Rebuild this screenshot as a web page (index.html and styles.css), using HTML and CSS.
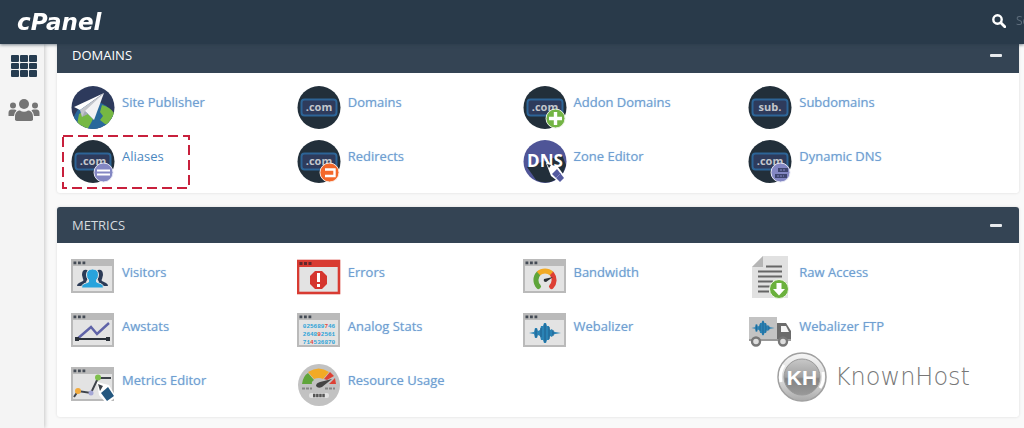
FILE: index.html
```html
<!DOCTYPE html>
<html lang="en">
<head>
    <meta charset="UTF-8">
    <meta name="viewport" content="width=device-width, initial-scale=1.0">
    <title>cPanel</title>
    <link rel="stylesheet" href="styles.css">
</head>

<body>
    <!-- shared icon parts -->
    <svg class="defs" width="0" height="0" aria-hidden="true">
        <symbol id="disc" viewBox="0 0 44 44">
            <circle cx="22" cy="22.5" r="21.5" fill="#222f3a"/>
            <rect x="4.5" y="14.5" width="35" height="16" rx="3" fill="#2e3b5c" stroke="#2d6496" stroke-width="2"/>
        </symbol>
        <symbol id="window" viewBox="0 0 44 44">
            <rect x="1" y="5" width="41" height="32" fill="#e3e3e3" stroke="#bababa" stroke-width="2"/>
            <path d="M0 4h43v7H0z" fill="#bababa"/>
            <path d="M2.500 6.500h2.800v2.800H2.500zM7 6.500h2.800v2.800H7zM11.500 6.500h2.800v2.800h-2.800z" fill="#444b55"/>
        </symbol>
        <symbol id="wave" viewBox="0 0 32 22">
            <path d="M0 11l5-1 1-4h2l1 3 2-1 1-4h2l1-3h2l1 3h2l1 4 2-1 1 2 2 1 6 1-6 1-2 1-1 2-2-1-1 4h-2l-1 3h-2l-1-3h-2l-1-4-2-1-1 3H6l-1-4z" fill="#2a83b5"/>
            <path d="M7 7v8M12 6v9M16 2v18M20 5v12M24 8v6" stroke="#1f5f8c" fill="none"/>
        </symbol>
    </svg>

    <header class="topbar">
        <a class="brand" href="#">cPanel</a>
        <form class="search">
            <label for="q" aria-label="Search">
                <svg width="14" height="14" viewBox="0 0 14 14">
                    <circle cx="5.500" cy="5.500" r="4.200" fill="none" stroke="#fff" stroke-width="2.400"/>
                    <path d="M8.800 8.800l4 4" stroke="#fff" stroke-width="2.800" stroke-linecap="round"/>
                </svg>
            </label>
            <input type="text" id="q" placeholder="Search">
        </form>
    </header>

    <nav class="sidebar">
        <a href="#" aria-label="Home">
            <svg width="32" height="24" viewBox="0 0 32 24">
                <g fill="#263c50">
                    <rect x="3" y="1" width="8" height="7" rx="1"/><rect x="12" y="1" width="8" height="7" rx="1"/><rect x="21" y="1" width="8" height="7" rx="1"/>
                    <rect x="3" y="9" width="8" height="6" rx="1"/><rect x="12" y="9" width="8" height="6" rx="1"/><rect x="21" y="9" width="8" height="6" rx="1"/>
                    <rect x="3" y="16" width="8" height="7" rx="1"/><rect x="12" y="16" width="8" height="7" rx="1"/><rect x="21" y="16" width="8" height="7" rx="1"/>
                </g>
            </svg>
        </a>
        <a href="#" aria-label="User Manager">
            <svg width="32" height="24" viewBox="0 0 32 24">
                <g fill="#757575">
                    <circle cx="16" cy="6" r="5"/>
                    <path d="M7 22v-3c0-4 2-6.500 5-6.500 2.500 1.600 5.500 1.600 8 0 3 0 5 2.500 5 6.500v3q-1 1-2 1H9q-1 0-2-1z"/>
                    <circle cx="5" cy="7.500" r="3"/>
                    <circle cx="27" cy="7.500" r="3"/>
                    <path d="M.5 18v-3q0-3.500 3-3.500h3q1 0 2 1Q6 15 6 18zM31.500 18v-3q0-3.500-3-3.500h-3q-1 0-2 1Q26 15 26 18z"/>
                </g>
            </svg>
        </a>
    </nav>

    <main class="content">
        <section class="panel">
            <div class="panel-head">
                <h2 class="sharp">DOMAINS</h2>
                <button type="button" class="collapse" aria-label="Collapse Domains"></button>
            </div>
            <div class="tools">
                <a class="tool" href="#">
                    <svg viewBox="0 0 44 44">
                        <clipPath id="round"><circle cx="22" cy="22.500" r="21.500"/></clipPath>
                        <g clip-path="url(#round)">
                            <path d="M0 0h44v44H0z" fill="#2d3a5c"/>
                            <circle cx="23" cy="38" r="21" fill="#29689b"/>
                            <path d="M8 29q5-4 9 0l5 5-2 4-4 7H5zM31 20q8 2 12 8v14l-9-3-5-4 3-4-3-4z" fill="#76b843"/>
                        </g>
                        <path d="M33 8L3 22l6 3z" fill="#fff"/>
                        <path d="M33 8L9 25l2 7 4-4z" fill="#c3c5cb"/>
                        <path d="M33 8L14 26l9 9z" fill="#f2f2f4"/>
                        <path d="M14 26l-3 6 6-3z" fill="#a5a9b4"/>
                    </svg>
                    <span>Site Publisher</span>
                </a>
                <a class="tool" href="#">
                    <svg viewBox="0 0 44 44">
                        <use href="#disc"/>
                        <text class="tld" x="22" y="26">.com</text>
                    </svg>
                    <span>Domains</span>
                </a>
                <a class="tool" href="#">
                    <svg viewBox="0 0 44 44">
                        <use href="#disc"/>
                        <text class="tld" x="22" y="26">.com</text>
                        <circle cx="32.500" cy="33.500" r="9.500" fill="#73b444" stroke="#e8f1e2"/>
                        <path d="M32.500 27v13M26 33.500h13" stroke="#fff" stroke-width="3.400"/>
                    </svg>
                    <span>Addon Domains</span>
                </a>
                <a class="tool" href="#">
                    <svg viewBox="0 0 44 44">
                        <use href="#disc"/>
                        <text class="tld" x="22" y="26">sub.</text>
                    </svg>
                    <span>Subdomains</span>
                </a>
                <a class="tool marked" href="#">
                    <svg viewBox="0 0 44 44">
                        <use href="#disc"/>
                        <text class="tld" x="22" y="26">.com</text>
                        <circle cx="32.500" cy="33.500" r="9.500" fill="#8387c3" stroke="#e6e7f4"/>
                        <path d="M26 31.500h13M26 35.500h13" stroke="#fff" stroke-width="2"/>
                    </svg>
                    <span>Aliases</span>
                    <svg class="marker" viewBox="0 0 128 54">
                        <rect x="1" y="1" width="126" height="52" fill="none" stroke="#c8203c" stroke-width="2" stroke-dasharray="10 5"/>
                    </svg>
                </a>
                <a class="tool" href="#">
                    <svg viewBox="0 0 44 44">
                        <use href="#disc"/>
                        <text class="tld" x="22" y="26">.com</text>
                        <circle cx="32.500" cy="33.500" r="9.500" fill="#f4682a" stroke="#fbe9df"/>
                        <path d="M28 30.500h9.500v6.500H28" fill="none" stroke="#fff" stroke-width="2.400"/>
                    </svg>
                    <span>Redirects</span>
                </a>
                <a class="tool" href="#">
                    <svg viewBox="0 0 44 44">
                        <circle cx="22" cy="22.500" r="21.500" fill="#4f5597"/>
                        <path d="M4 28l9 13q10 5 19 0l8-7 3-8-4-10z" fill="#222f3a"/>
                        <text class="dns" x="22" y="28">DNS</text>
                        <path d="M23 24l12 4 8 11-6 5-9-7z" fill="#fff"/>
                        <path d="M29 35l5-5 7 9-4 4z" fill="#555b9f"/>
                        <path d="M33 39l5-5" stroke="#8387c3"/>
                        <path d="M24 25l4 1-2 3z" fill="#222f3a"/>
                    </svg>
                    <span>Zone Editor</span>
                </a>
                <a class="tool" href="#">
                    <svg viewBox="0 0 44 44">
                        <use href="#disc"/>
                        <text class="tld" x="22" y="26">.com</text>
                        <circle cx="32.500" cy="33.500" r="9.500" fill="#8387c3" stroke="#e6e7f4"/>
                        <path d="M30 29h10v4H30zM27 35h12v4H27z" fill="#3f4670"/>
                        <path d="M32 31h6M29 37h7" stroke="#8387c3" stroke-dasharray="2 1"/>
                    </svg>
                    <span>Dynamic DNS</span>
                </a>
            </div>
        </section>

        <section class="panel">
            <div class="panel-head">
                <h2>METRICS</h2>
                <button type="button" class="collapse" aria-label="Collapse Metrics"></button>
            </div>
            <div class="tools">
                <a class="tool" href="#">
                    <svg viewBox="0 0 44 44">
                        <use href="#window"/>
                        <path d="M11 20q0-6 5-5 2 1 1 8l-2 4 2 4H6q0-2 2-3l4-2q1-1 0-2zM32 20q0-6-5-5-2 1-1 8l2 4-2 4h11q0-2-2-3l-4-2q-1-1 0-2z" fill="#2b3a55"/>
                        <path d="M21.500 14q6 0 6 6 0 3-2 5v2l5 2q2 1 2 4h-22q0-3 2-4l5-2v-2q-2-2-2-5 0-6 6-6z" fill="#28a3dc" stroke="#e3e3e3"/>
                    </svg>
                    <span>Visitors</span>
                </a>
                <a class="tool" href="#">
                    <svg viewBox="0 0 44 44">
                        <rect x="1" y="6" width="41" height="32" fill="#e3e3e3" stroke="#d83b32" stroke-width="2.600"/>
                        <path d="M0 5h43v7H0z" fill="#d83b32"/>
                        <path d="M2.500 7h3v3h-3zM7 7h3v3H7zM11.500 7h3v3h-3z" fill="#60282c"/>
                        <path d="M18 16h7l5 5v8l-5 5h-7l-5-5v-8z" fill="#d5352e"/>
                        <path d="M21.500 18v9M21.500 29v3" stroke="#fff" stroke-width="3"/>
                    </svg>
                    <span>Errors</span>
                </a>
                <a class="tool" href="#">
                    <svg viewBox="0 0 44 44">
                        <use href="#window"/>
                        <g fill="none" stroke-width="5">
                            <path d="M15.500 31.500a9.500 9.500 0 0 1 0-13" stroke="#5fa53a" stroke-linecap="round"/>
                            <path d="M29 19a9.500 9.500 0 0 1-.5 12.500" stroke="#dd4034" stroke-linecap="round"/>
                            <path d="M15.500 18.500a9.500 9.500 0 0 1 13 0" stroke="#f2aa25"/>
                        </g>
                        <path d="M30 22l-7 5q-3 0-2-3z" fill="#2b3036"/>
                    </svg>
                    <span>Bandwidth</span>
                </a>
                <a class="tool" href="#">
                    <svg viewBox="0 0 44 44">
                        <path d="M15 1h25v42H4V12z" fill="#e1e1e1"/>
                        <path d="M15 1v11H4z" fill="#b5b5b5"/>
                        <path d="M18 11.500h16M10 16.500h24M10 21.500h24M10 26.500h15M10 31.500h12M10 36.500h11" stroke="#666" stroke-width="2"/>
                        <circle cx="31" cy="34" r="9.500" fill="#6bb13d" stroke="#edf5e7"/>
                        <path d="M28.500 28h5v6h3.500l-6 6.500-6-6.500h3.500z" fill="#fff"/>
                    </svg>
                    <span>Raw Access</span>
                </a>
                <a class="tool" href="#">
                    <svg viewBox="0 0 44 44">
                        <use href="#window"/>
                        <path d="M5 31l15-13 6 7 12-11" fill="none" stroke="#5f63a8" stroke-width="2.400"/>
                        <path d="M5 30h33" stroke="#2b3139" stroke-width="2"/>
                        <path d="M4 28h4v4H4zM35 28h4v4h-4z" fill="#2b3139"/>
                    </svg>
                    <span>Awstats</span>
                </a>
                <a class="tool" href="#">
                    <svg viewBox="0 0 44 44">
                        <use href="#window"/>
                        <g class="digits">
                            <text x="22" y="19">025689<tspan>7</tspan>46</text>
                            <text x="22" y="27">2648<tspan>9</tspan>2561</text>
                            <text x="22" y="35">71<tspan>4</tspan>536870</text>
                        </g>
                    </svg>
                    <span>Analog Stats</span>
                </a>
                <a class="tool" href="#">
                    <svg viewBox="0 0 44 44">
                        <use href="#window"/>
                        <use href="#wave" x="6" y="13" width="32" height="22"/>
                    </svg>
                    <span>Webalizer</span>
                </a>
                <a class="tool" href="#">
                    <svg viewBox="0 0 44 44">
                        <path d="M1 8h28v23H1z" fill="#c3c3c3"/>
                        <path d="M29 14h9l5 8v9H29z" fill="#6b6b6b"/>
                        <path d="M33 17h5l3 6h-8z" fill="#f4f4f4"/>
                        <path d="M1 30h42v2H1z" fill="#999"/>
                        <use href="#wave" x="3" y="11" width="24" height="16"/>
                        <circle cx="8" cy="32.500" r="4" fill="#ddd" stroke="#777" stroke-width="2.400"/>
                        <circle cx="35" cy="32.500" r="4" fill="#ddd" stroke="#777" stroke-width="2.400"/>
                    </svg>
                    <span>Webalizer FTP</span>
                </a>
                <a class="tool" href="#">
                    <svg viewBox="0 0 44 44">
                        <use href="#window"/>
                        <path d="M3 34l4-6 13 2 7-15h13" fill="none" stroke="#3e434a" stroke-width="2"/>
                        <circle cx="7" cy="28" r="3" fill="#f2aa3c"/>
                        <circle cx="20" cy="30" r="2.500" fill="#a5a7d6"/>
                        <circle cx="27" cy="14.500" r="3" fill="#7fc04c"/>
                        <path d="M26 19l12 3 7 12-9 7-8-9z" fill="#fff"/>
                        <path d="M30 30l7-6 6 9-7 5z" fill="#24577f"/>
                        <path d="M27 21l5 2-3 5z" fill="#3e434a"/>
                    </svg>
                    <span>Metrics Editor</span>
                </a>
                <a class="tool" href="#">
                    <svg viewBox="0 0 44 44">
                        <circle cx="22" cy="22" r="21" fill="#c2c2c2"/>
                        <path d="M5 21q1-8 6-11l6 7q-3 2-2 4z" fill="#5fa53a"/>
                        <path d="M11 9q11-7 21 0l-6 7q-4-2-9 0z" fill="#f2aa25"/>
                        <path d="M33 9l4 4-7 4-3-1zM38 15l1 6h-7z" fill="#dd4034"/>
                        <path d="M35 16l-10 8q-4 2-6-1 0-3 4-4z" fill="#444"/>
                        <path d="M5 25.500h10M28 25.500h10" stroke="#858585" stroke-width="2" stroke-dasharray="3 1"/>
                        <rect x="12" y="30" width="20" height="5" rx="2" fill="#e1e1e1"/>
                        <path d="M16 32.500h12" stroke="#555" stroke-width="3.500" stroke-dasharray="2.500 .6"/>
                    </svg>
                    <span>Resource Usage</span>
                </a>
            </div>

            <div class="knownhost">
                <svg width="50" height="50" viewBox="0 0 50 50">
                    <linearGradient id="rim" x1="0" y1="0" x2="0" y2="1">
                        <stop offset="0" stop-color="#f6f6f6"/><stop offset=".6" stop-color="#d6d6d6"/><stop offset="1" stop-color="#aaa"/>
                    </linearGradient>
                    <linearGradient id="face" x1="0" y1="0" x2="0" y2="1">
                        <stop offset="0" stop-color="#c8c8c8"/><stop offset=".5" stop-color="#a0a0a0"/><stop offset=".55" stop-color="#838383"/><stop offset="1" stop-color="#999"/>
                    </linearGradient>
                    <circle cx="25" cy="25" r="24" fill="url(#rim)" stroke="#a0a0a0" stroke-width="1.500"/>
                    <path d="M4 30a21.500 21.500 0 0 1 3-17M46 20a21.500 21.500 0 0 1-3 16" fill="none" stroke="#fff" stroke-width="3"/>
                    <circle cx="25" cy="25" r="18" fill="url(#face)" stroke="#999"/>
                    <text class="monogram" x="25" y="33">KH</text>
                </svg>
                <span>KnownHost</span>
            </div>
        </section>
    </main>
</body>
</html>
```

FILE: styles.css
```css
* {
    box-sizing: border-box;
}

body {
    margin: 0;
    background: #f9f9f9;
    font-family: "Open Sans", "Noto Sans", sans-serif;
    font-size: 13px;
    line-height: 18px;
}

.defs {
    display: block;
}

/* top bar */
.topbar {
    position: fixed;
    top: 0;
    left: 0;
    right: 0;
    z-index: 2;
    display: flex;
    align-items: center;
    justify-content: space-between;
    height: 44px;
    padding-left: 17px;
    background: #293a4a;
    box-shadow: 0 1px 3px rgba(41, 58, 74, 0.6);
}

.brand {
    color: #fff;
    font-family: "DejaVu Sans", sans-serif;
    font-size: 23px;
    font-weight: bold;
    font-style: italic;
    line-height: 42px;
    text-decoration: none;
}

.search {
    display: flex;
    align-items: center;
    gap: 10px;
    padding-bottom: 2px;
}

.search label {
    display: flex;
}

.search input {
    width: 8px;
    padding: 0;
    border: 0;
    background: none;
    color: #fff;
    font: inherit;
    font-size: 12px;
}

.search input::placeholder {
    color: #5d6c7b;
}

/* sidebar */
.sidebar {
    position: fixed;
    top: 44px;
    bottom: 0;
    left: 0;
    display: flex;
    flex-direction: column;
    align-items: center;
    gap: 20px;
    width: 44px;
    padding: 10px 0 0 4px;
    background: #f4f4f4;
    box-shadow: 1px 0 4px rgba(0, 0, 0, 0.2);
}

.sidebar a,
.sidebar svg {
    display: block;
}

/* panels */
.content {
    display: flex;
    flex-direction: column;
    gap: 14px;
    margin-left: 57px;
    padding: 37px 5px 11px 0;
}

.panel {
    position: relative;
    background: #fff;
    border-radius: 3px;
    box-shadow: 0 0 3px rgba(0, 0, 0, 0.12);
}

.panel-head {
    display: flex;
    align-items: center;
    justify-content: space-between;
    height: 36px;
    padding: 0 17px 0 15px;
    background: #344454;
    border-radius: 3px 3px 0 0;
}

.panel-head h2 {
    margin: 0;
    color: #d5dade;
    font-size: 13px;
    font-weight: normal;
}

.panel-head .sharp {
    color: #fff;
}

.collapse {
    width: 12px;
    height: 3px;
    padding: 0;
    border: 0;
    border-radius: 1px;
    background: #e8ebee;
    cursor: pointer;
}

.tools {
    display: grid;
    grid-template-columns: repeat(4, 1fr);
    grid-auto-rows: 54px;
    padding: 12px 45px 0 14px;
}

.tool {
    position: relative;
    display: flex;
    align-items: flex-start;
    gap: 7px;
    color: #6f9fd2;
    text-decoration: none;
}

.tool svg {
    flex: none;
    width: 44px;
    height: 44px;
}

.tool span {
    padding-top: 8px;
}

.tool:hover span {
    text-decoration: underline;
}

/* everything but the highlighted tool is slightly out of focus */
.tool:not(.marked) span {
    text-shadow: 0 0 1px #a9c6e6;
}

.tool.marked {
    color: #4a87c0;
}

.tool .marker {
    position: absolute;
    top: -4px;
    left: -9px;
    width: 128px;
    height: 54px;
}

.tld,
.dns {
    fill: #c3c6cc;
    font-size: 11px;
    font-weight: bold;
    text-anchor: middle;
}

.dns {
    fill: #fff;
    font-size: 17px;
}

.digits {
    fill: #2ea3d8;
    font-family: "Liberation Mono", monospace;
    font-size: 6px;
    font-weight: bold;
    text-anchor: middle;
}

.digits tspan {
    fill: #e0483c;
}

/* host logo */
.knownhost {
    position: absolute;
    right: 49px;
    bottom: 15px;
    display: flex;
    align-items: center;
    gap: 8px;
    color: #777;
    font-family: "DejaVu Sans", sans-serif;
    font-size: 24px;
    font-weight: 200;
    line-height: 28px;
}

.monogram {
    fill: #fff;
    font-family: "Liberation Sans", sans-serif;
    font-size: 21px;
    font-weight: bold;
    text-anchor: middle;
}
```
